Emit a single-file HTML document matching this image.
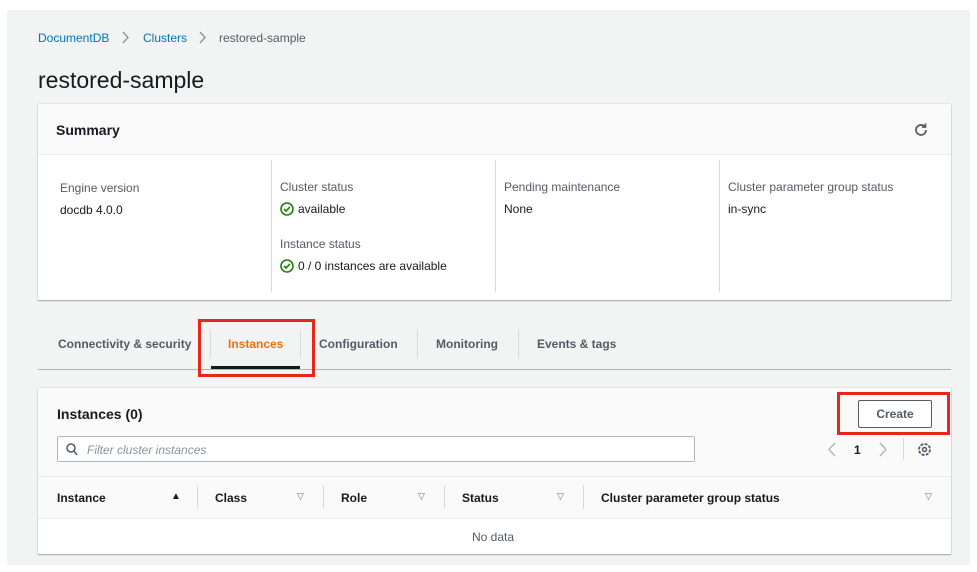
<!DOCTYPE html>
<html><head><style>
*{box-sizing:border-box;margin:0;padding:0}
body{width:977px;height:572px;background:#fff;font-family:"Liberation Sans",sans-serif;color:#16191f;position:relative;overflow:hidden}
.bg{position:absolute;left:7px;top:10px;width:963px;height:555px;background:#f2f3f3}
.a{position:absolute}
.lbl{font-size:12px;color:#545b64}
.val{font-size:12px;color:#16191f}
.card{position:absolute;background:#fff;box-shadow:0 1px 1px rgba(0,28,36,.3),0 0 1px rgba(0,28,36,.3)}
.tab{position:absolute;top:337px;font-size:12px;font-weight:bold;color:#545b64}
.sep{position:absolute;width:1px;background:#d5dbdb}
.th{position:absolute;top:491px;font-size:12px;font-weight:bold;color:#16191f}
.tri{position:absolute;top:491px;font-size:9px;color:#687078}
</style></head><body>
<div class="bg"></div>
<div class="a" style="left:38px;top:31px;font-size:12px;color:#0073bb">DocumentDB</div>
<svg class="a" style="left:122px;top:31px" width="8" height="13" viewBox="0 0 8 13"><path d="M1 1l5 5.5L1 12" fill="none" stroke="#879596" stroke-width="1.4"/></svg>
<div class="a" style="left:143px;top:31px;font-size:12px;color:#0073bb">Clusters</div>
<svg class="a" style="left:199px;top:31px" width="8" height="13" viewBox="0 0 8 13"><path d="M1 1l5 5.5L1 12" fill="none" stroke="#879596" stroke-width="1.4"/></svg>
<div class="a" style="left:219px;top:31px;font-size:12px;color:#545b64">restored-sample</div>
<div class="a" style="left:38px;top:67px;font-size:23px">restored-sample</div>

<div class="card" style="left:38px;top:104px;width:913px;height:196px">
 <div style="height:51px;background:#fafafa;border-bottom:1px solid #eaeded"></div>
</div>
<div class="a" style="left:56px;top:122px;font-size:14px;font-weight:bold">Summary</div>
<svg class="a" style="left:913px;top:122px" width="16" height="16" viewBox="0 0 16 16"><path d="M13 8a5 5 0 1 1-1.6-3.7" fill="none" stroke="#545b64" stroke-width="1.8"/><path d="M12.5 1.5v3.5H9" fill="none" stroke="#545b64" stroke-width="1.8"/></svg>
<div class="sep" style="left:271px;top:160px;height:132px"></div>
<div class="sep" style="left:495px;top:160px;height:132px"></div>
<div class="sep" style="left:719px;top:160px;height:132px"></div>
<div class="a lbl" style="left:60px;top:181px">Engine version</div>
<div class="a val" style="left:60px;top:203px">docdb 4.0.0</div>
<div class="a lbl" style="left:280px;top:180px">Cluster status</div>
<svg class="a" style="left:280px;top:202px" width="14" height="14" viewBox="0 0 14 14"><circle cx="7" cy="7" r="6" fill="none" stroke="#1d8102" stroke-width="1.6"/><path d="M4 7l2 2 4-4" fill="none" stroke="#1d8102" stroke-width="1.6"/></svg>
<div class="a val" style="left:298px;top:202px">available</div>
<div class="a lbl" style="left:280px;top:237px">Instance status</div>
<svg class="a" style="left:280px;top:259px" width="14" height="14" viewBox="0 0 14 14"><circle cx="7" cy="7" r="6" fill="none" stroke="#1d8102" stroke-width="1.6"/><path d="M4 7l2 2 4-4" fill="none" stroke="#1d8102" stroke-width="1.6"/></svg>
<div class="a val" style="left:298px;top:259px">0 / 0 instances are available</div>
<div class="a lbl" style="left:504px;top:180px">Pending maintenance</div>
<div class="a val" style="left:504px;top:202px">None</div>
<div class="a lbl" style="left:728px;top:180px">Cluster parameter group status</div>
<div class="a val" style="left:728px;top:202px">in-sync</div>

<div class="tab" style="left:58px">Connectivity &amp; security</div>
<div class="sep" style="left:210px;top:330px;height:28px"></div>
<div class="tab" style="left:228px;color:#ec7211">Instances</div>
<div class="sep" style="left:300px;top:330px;height:28px"></div>
<div class="tab" style="left:319px">Configuration</div>
<div class="sep" style="left:417px;top:330px;height:28px"></div>
<div class="tab" style="left:436px">Monitoring</div>
<div class="sep" style="left:518px;top:330px;height:28px"></div>
<div class="tab" style="left:537px">Events &amp; tags</div>
<div class="a" style="left:38px;top:369px;width:913px;height:1px;background:#aab7b8"></div>
<div class="a" style="left:211px;top:366px;width:89px;height:3px;background:#16191f"></div>
<div class="a" style="left:198px;top:319px;width:117px;height:58px;border:3px solid #e8271b"></div>

<div class="card" style="left:38px;top:388px;width:913px;height:166px;background:#fafafa">
 <div style="position:absolute;top:130px;left:0;right:0;bottom:0;background:#fff;border-top:1px solid #eaeded"></div>
 <div style="position:absolute;top:88px;left:0;right:0;height:1px;background:#eaeded"></div>
</div>
<div class="a" style="left:57px;top:406px;font-size:14px;font-weight:bold">Instances (0)</div>
<div class="a" style="left:858px;top:400px;width:74px;height:28px;border:1px solid #545b64;border-radius:2px;background:#fff;font-size:12px;font-weight:bold;color:#545b64;text-align:center;line-height:26px">Create</div>
<div class="a" style="left:837px;top:392px;width:113px;height:43px;border:3px solid #e8271b"></div>
<div class="a" style="left:57px;top:436px;width:638px;height:26px;border:1px solid #aab7b8;border-radius:2px;background:#fff"></div>
<svg class="a" style="left:66px;top:443px" width="12" height="13" viewBox="0 0 12 13"><circle cx="5" cy="5" r="4" fill="none" stroke="#545b64" stroke-width="1.5"/><path d="M8 8l3 4" stroke="#545b64" stroke-width="1.5"/></svg>
<div class="a" style="left:87px;top:443px;font-size:12px;font-style:italic;color:#879596">Filter cluster instances</div>
<svg class="a" style="left:828px;top:442px" width="8" height="15" viewBox="0 0 8 15"><path d="M7 1L1 7.5 7 14" fill="none" stroke="#aab7b8" stroke-width="1.3"/></svg>
<div class="a" style="left:854px;top:443px;font-size:12px;font-weight:bold">1</div>
<svg class="a" style="left:879px;top:442px" width="8" height="15" viewBox="0 0 8 15"><path d="M1 1l6 6.5L1 14" fill="none" stroke="#aab7b8" stroke-width="1.3"/></svg>
<div class="sep" style="left:903px;top:438px;height:22px"></div>
<svg class="a" style="left:917px;top:442px" width="15" height="15" viewBox="0 0 15 15"><circle cx="7.5" cy="7.5" r="5.5" fill="none" stroke="#545b64" stroke-width="1.8" stroke-dasharray="3 1.3"/><circle cx="7.5" cy="7.5" r="2" fill="none" stroke="#545b64" stroke-width="1.5"/></svg>
<div class="th" style="left:57px">Instance</div><div class="a" style="left:171px;top:491px;font-size:10px">▲</div>
<div class="sep" style="left:197px;top:485px;height:24px"></div>
<div class="th" style="left:215px">Class</div><div class="tri" style="left:297px">▽</div>
<div class="sep" style="left:323px;top:485px;height:24px"></div>
<div class="th" style="left:341px">Role</div><div class="tri" style="left:418px">▽</div>
<div class="sep" style="left:444px;top:485px;height:24px"></div>
<div class="th" style="left:462px">Status</div><div class="tri" style="left:557px">▽</div>
<div class="sep" style="left:583px;top:485px;height:24px"></div>
<div class="th" style="left:601px">Cluster parameter group status</div><div class="tri" style="left:925px">▽</div>
<div class="a" style="left:472px;top:530px;font-size:12px;color:#545b64">No data</div>
</body></html>
